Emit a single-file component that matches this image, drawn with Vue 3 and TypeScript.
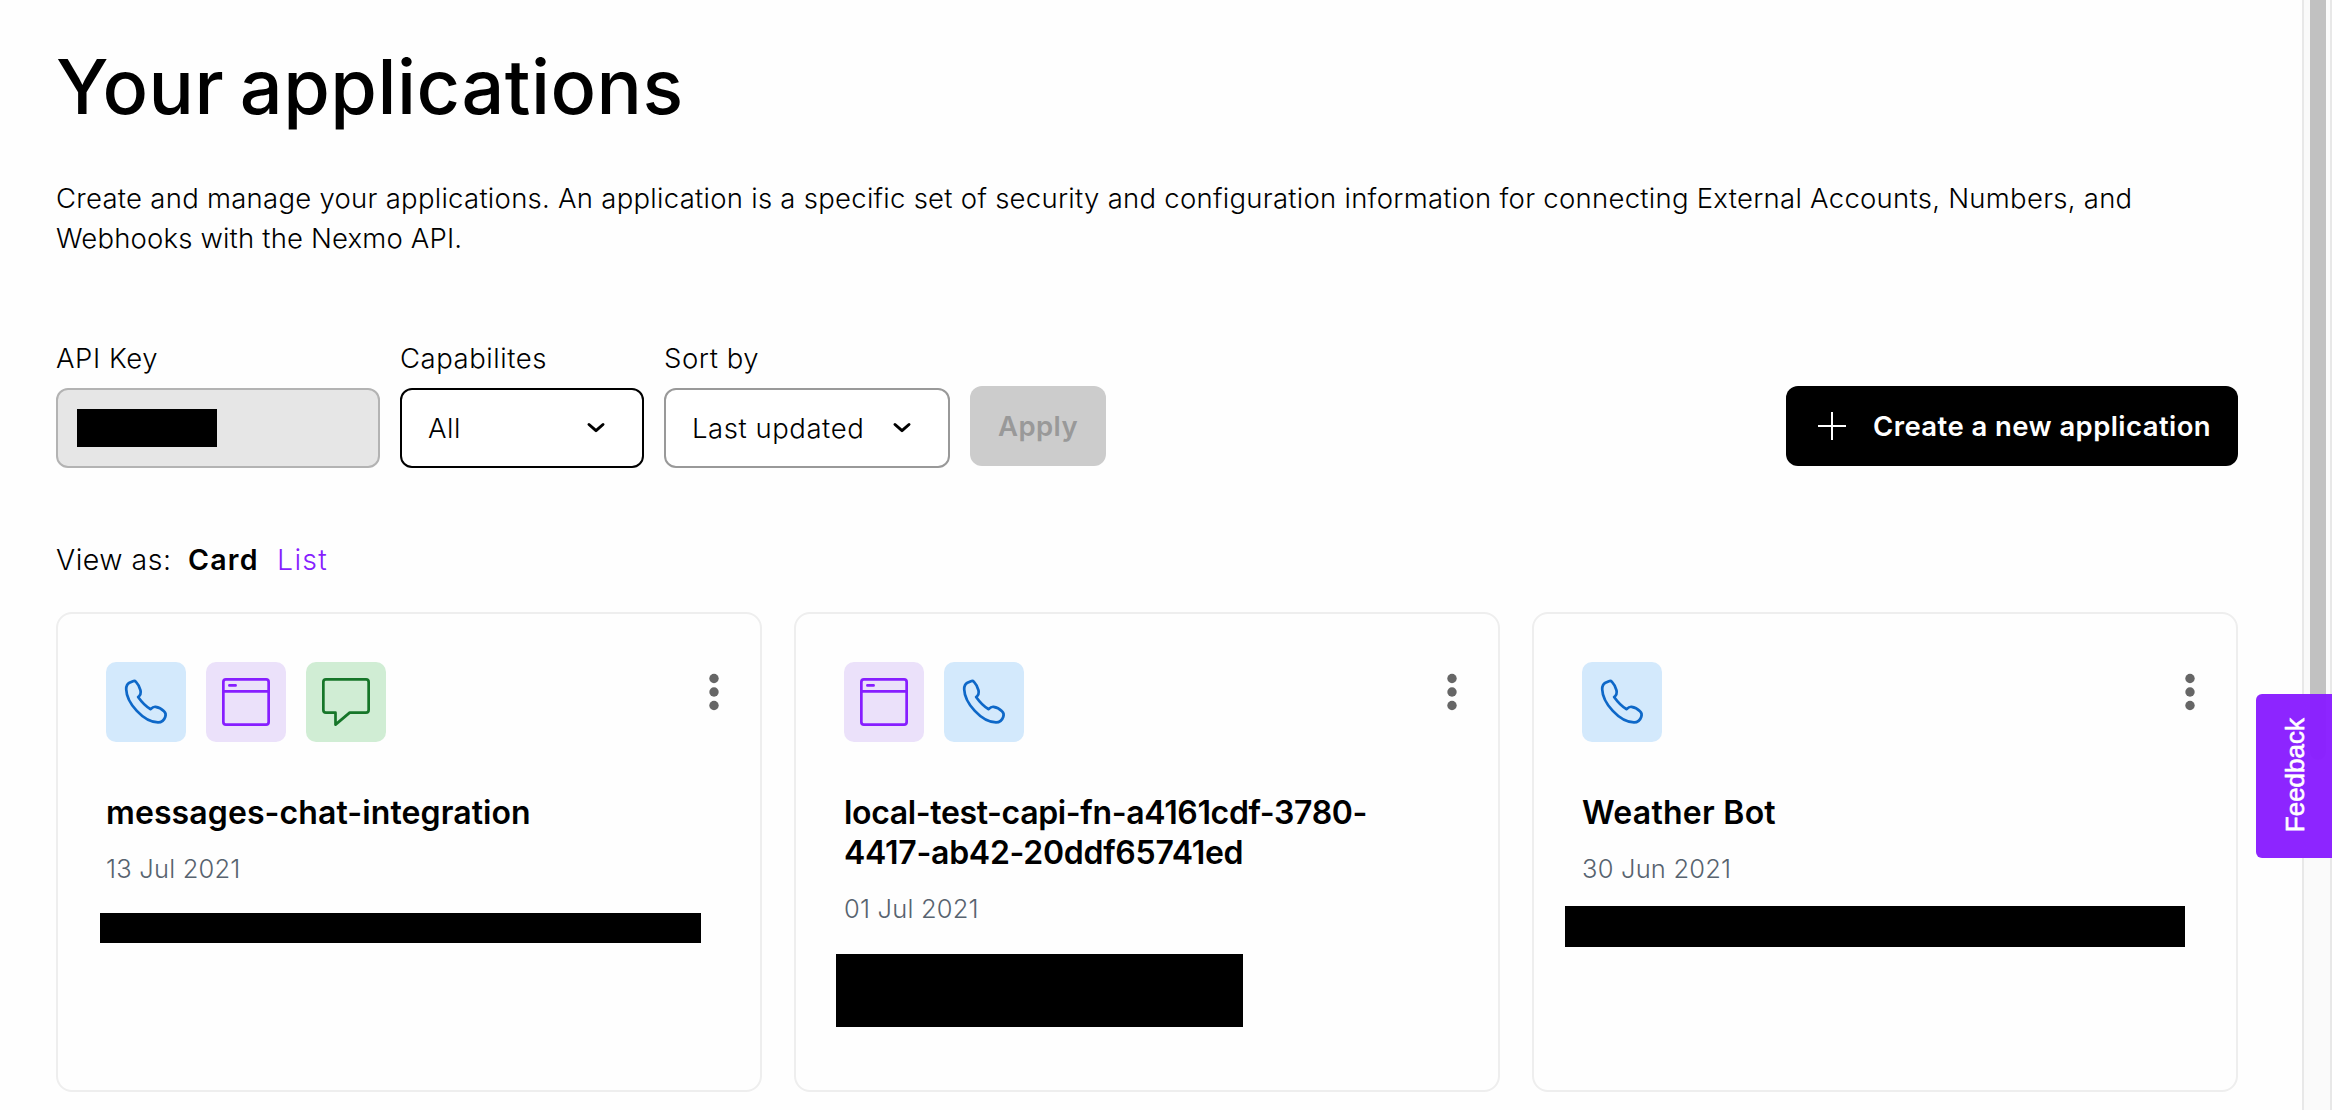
<script setup lang="ts">
type Capability = 'voice' | 'rtc' | 'messages'

interface NameLine {
  text: string
  tracking: number
}

interface Redaction {
  width: number
  height: number
  top: number
  left: number
}

interface Application {
  name: NameLine[]
  date: string
  capabilities: Capability[]
  redaction: Redaction
}

const applications: Application[] = [
  {
    name: [{ text: 'messages-chat-integration', tracking: 0.1 }],
    date: '13 Jul 2021',
    capabilities: ['voice', 'rtc', 'messages'],
    redaction: { width: 601, height: 30, top: 25, left: -6 },
  },
  {
    name: [
      { text: 'local-test-capi-fn-a4161cdf-3780-', tracking: -0.36 },
      { text: '4417-ab42-20ddf65741ed', tracking: -0.28 },
    ],
    date: '01 Jul 2021',
    capabilities: ['rtc', 'voice'],
    redaction: { width: 407, height: 73, top: 26, left: -8 },
  },
  {
    name: [{ text: 'Weather Bot', tracking: 0.25 }],
    date: '30 Jun 2021',
    capabilities: ['voice'],
    redaction: { width: 620, height: 41, top: 18, left: -17 },
  },
]

function redactionStyle(r: Redaction) {
  return {
    width: `${r.width}px`,
    height: `${r.height}px`,
    marginTop: `${r.top}px`,
    marginLeft: `${r.left}px`,
  }
}
</script>

<template>
  <div class="page">
    <main class="content">
      <h1 class="heading">Your applications</h1>
      <p class="intro">
        <span>Create and manage your applications. An application is a specific set of security and configuration information for connecting External Accounts, Numbers, and</span><br />
        <span class="intro-end">Webhooks with the Nexmo API.</span>
      </p>

      <section class="toolbar">
        <div class="field key">
          <label class="label">API Key</label>
          <div class="control disabled"><span class="mask"></span></div>
        </div>
        <div class="field capability">
          <label class="label">Capabilites</label>
          <div class="control active">
            <span>All</span>
            <svg class="chevron" viewBox="0 0 20 14"><path d="M3 3.5 10 9.7 17 3.5" /></svg>
          </div>
        </div>
        <div class="field sort">
          <label class="label">Sort by</label>
          <div class="control">
            <span>Last updated</span>
            <svg class="chevron" viewBox="0 0 20 14"><path d="M3 3.5 10 9.7 17 3.5" /></svg>
          </div>
        </div>
        <button class="button apply" disabled>Apply</button>
        <button class="button create">
          <svg class="plus" viewBox="0 0 28 28"><path d="M14 0v28M0 14h28" /></svg>
          <span>Create a new application</span>
        </button>
      </section>

      <nav class="views">
        <span class="view-label">View as:</span>
        <strong class="view-card">Card</strong>
        <a class="view-list">List</a>
      </nav>

      <section class="cards">
        <article v-for="app in applications" :key="app.date" class="card">
          <header class="card-head">
            <div class="icons">
              <span v-for="cap in app.capabilities" :key="cap" class="icon" :class="cap">
                <svg v-if="cap === 'voice'" viewBox="0 0 80 80">
                  <path d="M27 19.2 23.4 20.8C20.8 22.2 20.2 24.5 20.2 27.2 20.6 41 37.5 60.2 52 60.4 56 60.4 58 58.6 59.3 54.7 60 52.6 59.8 50.8 58 49.2 55.8 47 53 45.3 49.5 44.8 46.9 44.5 45.7 46.1 44.7 47.2 40.4 44.9 35.5 39.8 32.1 35 34.6 33.2 35.1 31 34.5 28.4 33.7 25 32 22 30 19.9 29.1 18.9 28 18.8 27 19.2Z" />
                </svg>
                <svg v-else-if="cap === 'rtc'" viewBox="0 0 80 80">
                  <rect x="17.35" y="17.35" width="45.3" height="45.3" rx="2.6" />
                  <path d="M17.35 29.4h45.3M23.4 23.4h6.2" />
                </svg>
                <svg v-else viewBox="0 0 80 80">
                  <path d="M20 17.35H60a2.65 2.65 0 0 1 2.65 2.65V48a2.65 2.65 0 0 1-2.65 2.65H43.7L29.5 62.6V50.65H20A2.65 2.65 0 0 1 17.35 48V20A2.65 2.65 0 0 1 20 17.35Z" />
                </svg>
              </span>
            </div>
            <svg class="menu" viewBox="0 0 10 38">
              <circle cx="5" cy="5.5" r="4.7" />
              <circle cx="5" cy="19" r="4.7" />
              <circle cx="5" cy="32.5" r="4.7" />
            </svg>
          </header>
          <h2 class="name">
            <span v-for="line in app.name" :key="line.text" :style="{ letterSpacing: `${line.tracking}px` }">{{ line.text }}</span>
          </h2>
          <div class="date">{{ app.date }}</div>
          <div class="redaction" :style="redactionStyle(app.redaction)"></div>
        </article>
      </section>
    </main>

    <aside class="scrollbar"><div class="thumb"></div></aside>
    <button class="feedback"><span>Feedback</span></button>
  </div>
</template>

<style>
body {
  background: #fff;
  overflow: hidden;
}
</style>

<style scoped>
* {
  box-sizing: border-box;
}
.page {
  position: relative;
  display: flex;
  justify-content: space-between;
  width: 2332px;
  height: 1110px;
  overflow: hidden;
  background: #fefefe;
  color: #000;
  font: 300 27.5px/40px Inter, 'Liberation Sans', sans-serif;
}
.content {
  width: 2238px;
  padding: 47px 0 0 56px;
}
.heading {
  margin: 0;
  font-size: 75.5px;
  font-weight: 500;
  line-height: 80px;
  letter-spacing: 0.5px;
  word-spacing: -5px;
  white-space: nowrap;
}
.intro {
  margin: 51px 0 0;
  letter-spacing: 0.27px;
  white-space: nowrap;
}
.intro-end {
  letter-spacing: 0.17px;
}
.toolbar {
  display: flex;
  align-items: flex-start;
  gap: 20px;
  margin-top: 80px;
  letter-spacing: 0.55px;
}
.field.key {
  width: 324px;
}
.field.capability {
  width: 244px;
}
.field.sort {
  width: 286px;
}
.label {
  display: block;
  height: 50px;
}
.control {
  display: flex;
  align-items: center;
  justify-content: space-between;
  height: 80px;
  padding: 0 36px 0 26px;
  border: 2px solid #999;
  border-radius: 12px;
  background: #fff;
  white-space: nowrap;
}
.control.active {
  border-color: #000;
}
.control.disabled {
  padding-left: 19px;
  border-color: #b3b3b3;
  background: #e6e6e6;
}
.mask {
  width: 140px;
  height: 38px;
  background: #000;
}
.chevron {
  width: 20px;
  height: 14px;
  fill: none;
  stroke: #000;
  stroke-width: 3;
  stroke-linecap: round;
  stroke-linejoin: round;
}
.button {
  display: flex;
  align-items: center;
  height: 80px;
  margin: 48px 0 0;
  padding: 0;
  border: 0;
  border-radius: 12px;
  font: inherit;
  font-weight: 600;
  letter-spacing: 0.42px;
  white-space: nowrap;
}
.apply {
  justify-content: center;
  width: 136px;
  background: #ccc;
  color: #999;
}
.create {
  gap: 27px;
  width: 452px;
  margin-left: auto;
  padding-left: 32px;
  background: #000;
  color: #fff;
}
.plus {
  width: 28px;
  height: 28px;
  stroke: #fff;
  stroke-width: 2;
}
.views {
  display: flex;
  margin-top: 72px;
  font-size: 28.5px;
  letter-spacing: 0.5px;
  white-space: nowrap;
}
.view-label {
  width: 132px;
}
.view-card {
  width: 89px;
  font-weight: 600;
  letter-spacing: 1.2px;
}
.view-list {
  color: #871eff;
  letter-spacing: 1.3px;
}
.cards {
  display: grid;
  grid-template-columns: repeat(3, 706px);
  gap: 32px;
  margin-top: 32px;
}
.card {
  height: 480px;
  padding: 48px;
  border: 2px solid #eee;
  border-radius: 16px;
}
.card-head {
  display: flex;
  justify-content: space-between;
}
.icons {
  display: flex;
  gap: 20px;
}
.icon {
  width: 80px;
  height: 80px;
  border-radius: 10px;
}
.icon svg {
  display: block;
  fill: none;
  stroke: currentColor;
  stroke-width: 2.7;
  stroke-linecap: round;
  stroke-linejoin: round;
}
.voice {
  background: #d3e9fc;
  color: #0e68c8;
}
.rtc {
  background: #ebe1fa;
  color: #871eff;
}
.messages {
  background: #d0edd4;
  color: #167629;
}
.menu {
  width: 10px;
  height: 38px;
  margin: 11px -7px 0 0;
  fill: #666;
}
.name {
  margin: 51px 0 0;
  font-size: 32px;
  font-weight: 600;
  line-height: 40px;
}
.name span {
  display: block;
  white-space: nowrap;
}
.date {
  margin-top: 16px;
  color: #57636f;
  font-size: 25.5px;
  line-height: 39px;
  letter-spacing: 0.2px;
}
.redaction {
  background: #000;
}
.scrollbar {
  width: 30px;
  padding-left: 6px;
  border: solid #e8e8e8;
  border-width: 0 2px;
  background: #fafafa;
}
.thumb {
  width: 16px;
  height: 760px;
  border-radius: 0 0 8px 8px;
  background: #c1c1c1;
}
.feedback {
  position: absolute;
  top: 694px;
  right: 0;
  display: flex;
  align-items: center;
  justify-content: center;
  width: 76px;
  height: 164px;
  padding: 0;
  border: 0;
  border-radius: 6px 0 0 6px;
  background: rgba(137, 30, 255, 0.97);
  color: #fff;
  font: 26px/30px 'Liberation Sans', sans-serif;
}
.feedback span {
  writing-mode: vertical-rl;
  transform: rotate(180deg);
  margin-left: 2px;
  margin-bottom: 2px;
  -webkit-text-stroke: 0.6px #fff;
}
</style>
